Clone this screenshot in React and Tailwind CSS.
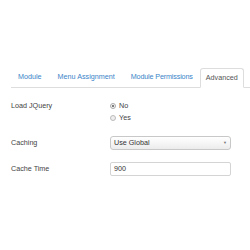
import React from "react";

const App = () => {
  return (
    <div className="w-[250px] h-[250px] bg-white overflow-hidden font-['Liberation_Sans',Arial,sans-serif] text-[7.2px] text-[#555]">
      <div className="pt-[68px] pl-[11px]">
        <ul className="flex items-end border-b border-[#dddddd] h-[20px] whitespace-nowrap">
          <li className="shrink-0 mr-[2px] px-[7px] h-[19px] flex items-center text-[#3a84c9]">Module</li>
          <li className="shrink-0 mr-[2px] px-[7px] h-[19px] flex items-center text-[#3a84c9]">Menu Assignment</li>
          <li className="shrink-0 mr-[2px] pl-[7px] pr-[5px] h-[19px] flex items-center text-[#3a84c9] tracking-[-0.15px]">
            Module Permissions
          </li>
          <li className="shrink-0 w-[44px] h-[20px] -mb-px flex items-center justify-center bg-white border border-[#dddddd] border-b-white rounded-t-[3px] text-[#555]">
            Advanced
          </li>
        </ul>
      </div>

      <div className="pl-[11px] pt-[12px]">
        <div className="flex">
          <div className="w-[99px] shrink-0 leading-[12px] text-[#444]">Load JQuery</div>
          <div className="flex flex-col">
            <label className="flex items-center h-[12px] gap-[3px] text-[#444]">
              <span className="w-[6px] h-[6px] rounded-full border border-[#aaa] bg-[#f3f3f3] flex items-center justify-center">
                <span className="w-[2px] h-[2px] rounded-full bg-[#555]" />
              </span>
              No
            </label>
            <label className="flex items-center h-[12px] gap-[3px] text-[#444]">
              <span className="w-[6px] h-[6px] rounded-full border border-[#bbb] bg-[#eee]" />
              Yes
            </label>
          </div>
        </div>

        <div className="flex items-center mt-[12px]">
          <div className="w-[99px] shrink-0 text-[#444]">Caching</div>
          <div className="w-[121px] h-[14px] flex items-center justify-between px-[3px] border border-[#c8c8c8] rounded-[3px] bg-gradient-to-b from-white to-[#ececec] text-[#333]">
            <span>Use Global</span>
            <span className="text-[4px] text-[#777]">▼</span>
          </div>
        </div>

        <div className="flex items-center mt-[12px]">
          <div className="w-[99px] shrink-0 text-[#444]">Cache Time</div>
          <div className="w-[121px] h-[14px] flex items-center px-[3px] border border-[#d4d4d4] rounded-[2px] bg-white text-[#333]">
            900
          </div>
        </div>
      </div>
    </div>
  );
};

export default App;
